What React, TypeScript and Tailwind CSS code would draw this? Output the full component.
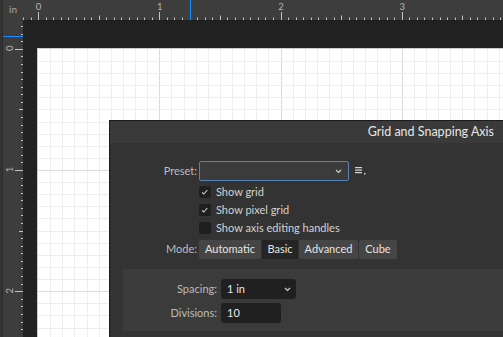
import React from "react";

const INCH = 121.2;
const X0 = 38.6;
const Y0 = 49.3;
const TICK = "#c4c4c4";

function TopRuler() {
  const ticks = [];
  for (let k = -2; k <= 64; k++) {
    const x = Math.floor(X0 + (k * INCH) / 16) + 0.5;
    const top = k % 16 === 0 ? 12 : k % 8 === 0 ? 15.5 : 17.5;
    ticks.push(<line key={k} x1={x} x2={x} y1={top} y2={20} stroke={TICK} strokeWidth={1} />);
  }
  const labels = [0, 1, 2, 3].map((n) => (
    <text
      key={n}
      x={X0 + n * INCH}
      y={9.5}
      fontSize={9.5}
      textAnchor="middle"
      fill="#b4b4b4"
      fontFamily="Lato, sans-serif"
    >
      {n}
    </text>
  ));
  return (
    <svg width={480} height={20} viewBox="23 0 480 20" className="block">
      {ticks}
      {labels}
      <line x1={190.5} x2={190.5} y1={0} y2={20} stroke="#1a8cff" strokeWidth={1} />
    </svg>
  );
}

function LeftRuler() {
  const ticks = [];
  for (let k = -4; k <= 40; k++) {
    const y = Math.floor(Y0 + (k * INCH) / 16) + 0.5;
    const left = k % 16 === 0 ? 15 : k % 8 === 0 ? 19 : 21;
    ticks.push(<line key={k} x1={left} x2={23} y1={y} y2={y} stroke={TICK} strokeWidth={1} />);
  }
  const labels = [0, 1, 2].map((n) => (
    <text
      key={n}
      transform={`translate(12.5 ${Y0 + n * INCH - 1}) rotate(-90)`}
      fontSize={9.5}
      textAnchor="middle"
      fill="#b4b4b4"
      fontFamily="Lato, sans-serif"
    >
      {n}
    </text>
  ));
  return (
    <svg width={20} height={317} viewBox="3 20 20 317" className="block">
      {ticks}
      {labels}
      <line x1={3} x2={23} y1={36.5} y2={36.5} stroke="#1a8cff" strokeWidth={1} />
    </svg>
  );
}

function CanvasGrid() {
  const lines = [];
  for (let k = 1; k <= 40; k++) {
    const x = Math.floor(X0 + (k * INCH) / 10) + 0.5;
    lines.push(
      <line key={`v${k}`} x1={x} x2={x} y1={49} y2={337} stroke={k % 10 === 0 ? "#dcdcdc" : "#eeeeee"} />
    );
  }
  for (let k = 1; k <= 25; k++) {
    const y = Math.floor(Y0 + (k * INCH) / 10) + 0.5;
    lines.push(
      <line key={`h${k}`} x1={38} x2={503} y1={y} y2={y} stroke={k % 10 === 0 ? "#dcdcdc" : "#eeeeee"} />
    );
  }
  return (
    <svg width={465} height={288} viewBox="38 49 465 288" className="block">
      {lines}
    </svg>
  );
}

function Chevron() {
  return (
    <svg width="7" height="5" viewBox="0 0 7 5">
      <path d="M1 1 L3.5 3.5 L6 1" fill="none" stroke="#d0d0d0" strokeWidth="1.2" />
    </svg>
  );
}

function Check({ on, label }: { on: boolean; label: string }) {
  return (
    <div className="flex items-center h-[18px]">
      <div className="w-[12px] h-[12px] rounded-[2px] bg-[#1f1f1f] flex items-center justify-center">
        {on && (
          <svg width="12" height="12" viewBox="0 0 12 12">
            <path d="M3 6.3 L4.8 8 L8.3 4" fill="none" stroke="#cfcfcf" strokeWidth="1.1" />
          </svg>
        )}
      </div>
      <span className="ml-[5px] text-[#d2d2d2]">{label}</span>
    </div>
  );
}

export default function App() {
  const modes = [
    { name: "Automatic", w: "w-[62px]", on: false },
    { name: "Basic", w: "w-[36px]", on: true },
    { name: "Advanced", w: "w-[59px]", on: false },
    { name: "Cube", w: "w-[38px]", on: false },
  ];

  return (
    <div className="relative w-[503px] h-[337px] overflow-hidden flex bg-[#222] font-['Lato',sans-serif] text-[11px]">
      <div className="w-[3px] bg-[#333] border-r border-[#2a2a2a]" />
      <div className="flex-1 flex flex-col">
        <div className="h-[20px] flex bg-[#3d3d3d]">
          <div className="w-[20px] text-[10px] text-[#a8a8a8] pl-[6px] pt-[3px] leading-[12px]">in</div>
          <TopRuler />
        </div>
        <div className="flex-1 flex">
          <div className="w-[20px] bg-[#3d3d3d]">
            <LeftRuler />
          </div>
          <div className="flex-1 bg-[#212121] pl-[14px] pt-[28px]">
            <div className="h-full bg-white border-l border-t border-[#cdcdcd]">
              <CanvasGrid />
            </div>
          </div>
        </div>
      </div>

      <div className="absolute left-[109px] top-[120px] right-0 bottom-0 border-l border-t border-[#1c1c1c] bg-[#333] flex flex-col">
        <div className="h-[22px] bg-[#3a3a3a] flex items-center justify-end pr-[9px] text-[12.5px] text-[#e6e6e6]">
          Grid and Snapping Axis
        </div>
        <div className="flex-1 flex flex-col pt-[18px]">
          <div className="flex items-center h-[20px]">
            <span className="w-[87px] text-right text-[#bcbcbc]">Preset:</span>
            <div className="ml-[2px] w-[150px] h-[20px] border border-[#5683b6] rounded-[2px] bg-[#3b3b3b] flex items-center justify-end pr-[6px]">
              <Chevron />
            </div>
            <svg width="12" height="10" viewBox="0 0 12 10" className="ml-[6px]">
              <rect x="0" y="1" width="7" height="1.2" fill="#d4d4d4" />
              <rect x="0" y="3.5" width="7" height="1.2" fill="#d4d4d4" />
              <rect x="0" y="6" width="7" height="1.2" fill="#d4d4d4" />
              <rect x="9" y="7" width="1.5" height="1.5" fill="#d4d4d4" />
            </svg>
          </div>

          <div className="mt-[2px] pl-[89px] flex flex-col">
            <Check on label="Show grid" />
            <Check on label="Show pixel grid" />
            <Check on={false} label="Show axis editing handles" />
          </div>

          <div className="mt-[3px] flex items-center h-[19px]">
            <span className="w-[87px] text-right text-[#bcbcbc]">Mode:</span>
            <div className="ml-[2px] flex gap-px">
              {modes.map((m) => (
                <div
                  key={m.name}
                  className={`${m.w} h-[19px] flex items-center justify-center rounded-[2px] text-[#e4e4e4] ${
                    m.on ? "bg-[#252525]" : "bg-[#454545]"
                  }`}
                >
                  {m.name}
                </div>
              ))}
            </div>
          </div>

          <div className="mt-[10px] ml-[13px] h-[62px] bg-[#3b3b3b] pt-[10px] flex flex-col gap-[4px]">
            <div className="flex items-center h-[20px]">
              <span className="w-[94px] text-right text-[#bcbcbc]">Spacing:</span>
              <div className="ml-[4px] w-[75px] h-[20px] rounded-[3px] bg-[#202020] flex items-center justify-between pl-[6px] pr-[5px] text-[#e8e8e8]">
                <span>1 in</span>
                <Chevron />
              </div>
            </div>
            <div className="flex items-center h-[20px]">
              <span className="w-[94px] text-right text-[#bcbcbc]">Divisions:</span>
              <div className="ml-[4px] w-[60px] h-[20px] rounded-[3px] bg-[#202020] flex items-center pl-[6px] text-[#e8e8e8]">
                10
              </div>
            </div>
          </div>
        </div>
      </div>
    </div>
  );
}
